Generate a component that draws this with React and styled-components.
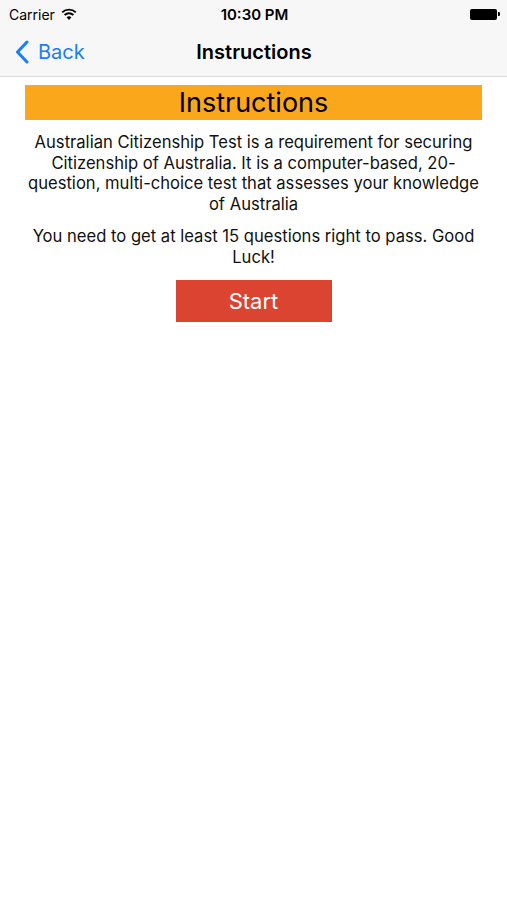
import React from 'react';
import styled, { createGlobalStyle } from 'styled-components';

const GlobalStyle = createGlobalStyle`
  html, body {
    margin: 0;
    padding: 0;
    background: #ffffff;
    font-family: Inter, "Liberation Sans", sans-serif;
  }
`;

const Screen = styled.div`
  width: 507px;
  height: 900px;
  background: #ffffff;
  display: flex;
  flex-direction: column;
`;

const Header = styled.header`
  background: #f7f7f7;
  border-bottom: 1px solid #d9d9d9;
`;

const StatusBar = styled.div`
  height: 28px;
  display: grid;
  grid-template-columns: 1fr auto 1fr;
  align-items: center;
  padding: 0 7px 0 9px;
  color: #000;
`;

const Carrier = styled.div`
  display: flex;
  align-items: center;
  gap: 6px;
  font-size: 14px;
`;

const Clock = styled.div`
  font-size: 15px;
  font-weight: 600;
`;

const Battery = styled.div`
  justify-self: end;
  display: flex;
  align-items: center;
`;

const BatteryBody = styled.div`
  width: 27px;
  height: 11px;
  background: #000;
  border-radius: 2px;
`;

const BatteryNub = styled.div`
  width: 2px;
  height: 4px;
  margin-left: 1px;
  background: #000;
  border-radius: 0 1px 1px 0;
`;

const NavBar = styled.div`
  height: 48px;
  display: grid;
  grid-template-columns: 1fr auto 1fr;
  align-items: center;
  padding: 0 14px 0 15px;
`;

const BackButton = styled.button`
  display: flex;
  align-items: center;
  gap: 9px;
  border: none;
  background: none;
  padding: 0;
  color: #157efb;
  font-family: inherit;
  font-size: 20px;
  cursor: pointer;
  justify-self: start;
`;

const Title = styled.h1`
  margin: 0;
  font-size: 20px;
  font-weight: 600;
  color: #000;
`;

const Content = styled.main`
  display: flex;
  flex-direction: column;
  align-items: center;
  padding: 8px 25px 0;
`;

const Banner = styled.div`
  align-self: stretch;
  height: 35px;
  background: #fba71c;
  color: #000;
  font-size: 27px;
  display: flex;
  align-items: center;
  justify-content: center;
`;

const Paragraph = styled.p`
  margin: ${(props) => props.gap}px 0 0;
  font-size: 16.6px;
  line-height: 20.5px;
  text-align: center;
  color: #111;
`;

const StartButton = styled.button`
  margin-top: 13px;
  width: 156px;
  height: 42px;
  border: none;
  background: #da4431;
  color: #fff;
  font-family: inherit;
  font-size: 22px;
  cursor: pointer;
`;

const Wifi = () => (
  <svg width="16" height="12" viewBox="0 0 16 12">
    <path d="M8 12 L5.6 9.2 A3.6 3.6 0 0 1 10.4 9.2 Z" fill="#000" />
    <path d="M3.6 7 A6.4 6.4 0 0 1 12.4 7" stroke="#000" strokeWidth="1.8" fill="none" />
    <path d="M1.2 4.4 A9.8 9.8 0 0 1 14.8 4.4" stroke="#000" strokeWidth="1.8" fill="none" />
  </svg>
);

const Chevron = () => (
  <svg width="14" height="24" viewBox="0 0 14 24">
    <path d="M12 2 L2.5 12 L12 22" stroke="#157efb" strokeWidth="3" fill="none" strokeLinecap="round" strokeLinejoin="round" />
  </svg>
);

export default function App() {
  return (
    <Screen>
      <GlobalStyle />
      <Header>
        <StatusBar>
          <Carrier>
            Carrier
            <Wifi />
          </Carrier>
          <Clock>10:30 PM</Clock>
          <Battery>
            <BatteryBody />
            <BatteryNub />
          </Battery>
        </StatusBar>
        <NavBar>
          <BackButton>
            <Chevron />
            Back
          </BackButton>
          <Title>Instructions</Title>
          <div />
        </NavBar>
      </Header>
      <Content>
        <Banner>Instructions</Banner>
        <Paragraph gap={12}>
          Australian Citizenship Test is a requirement for securing Citizenship of Australia. It is a
          computer-based, 20-question, multi-choice test that assesses your knowledge of Australia
        </Paragraph>
        <Paragraph gap={12}>
          You need to get at least 15 questions right to pass. Good Luck!
        </Paragraph>
        <StartButton>Start</StartButton>
      </Content>
    </Screen>
  );
}
